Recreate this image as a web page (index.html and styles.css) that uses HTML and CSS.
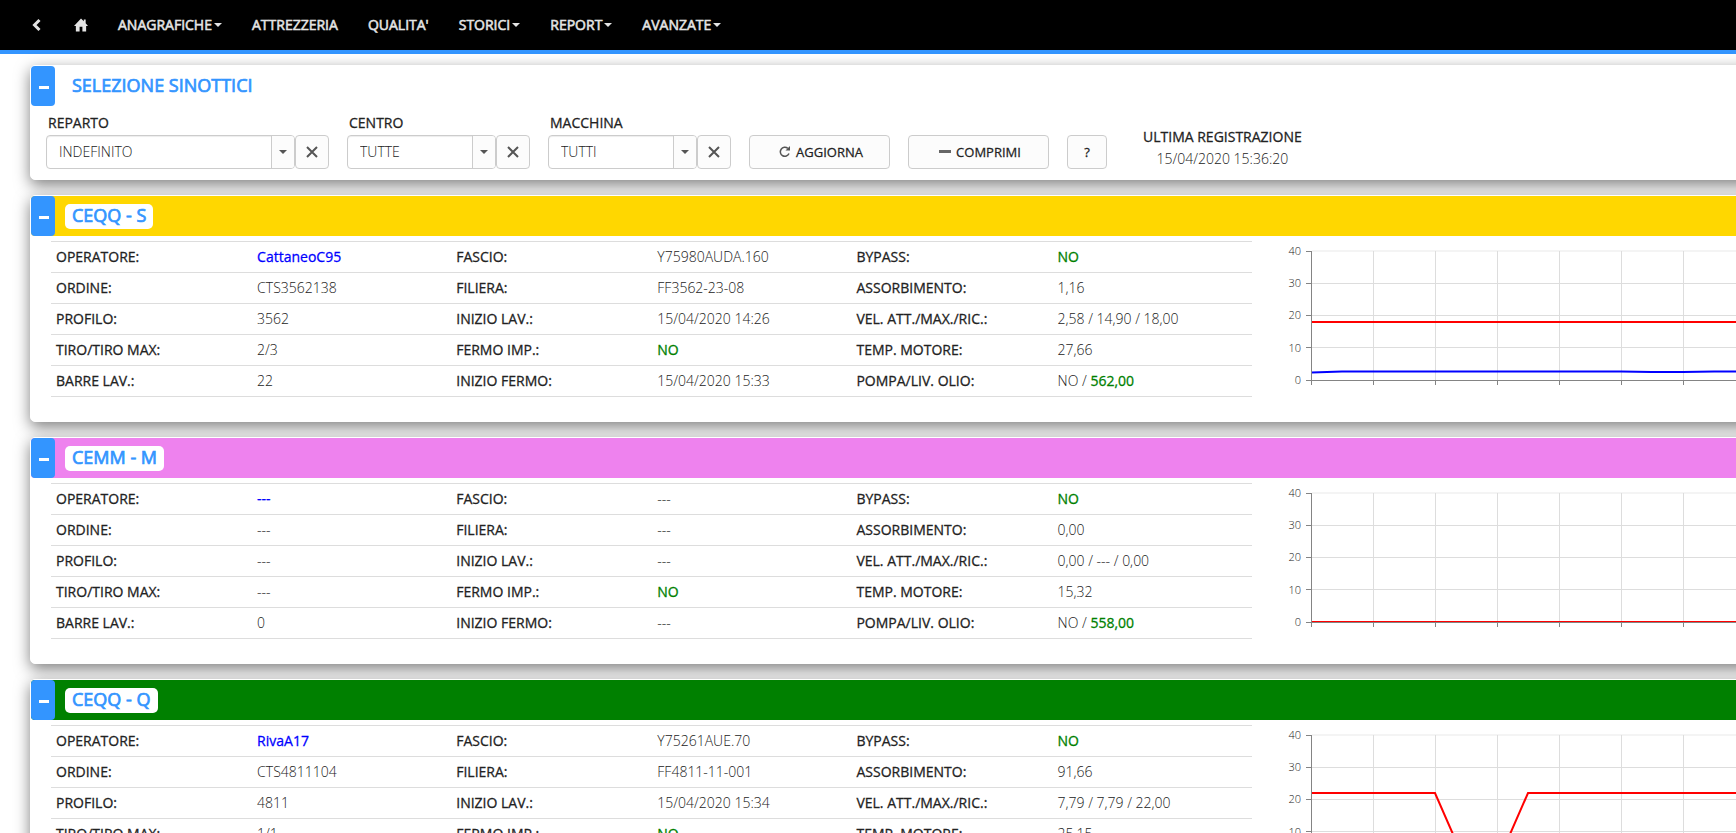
FILE: index.html
```html
<!DOCTYPE html>
<html lang="it">
	<head>
		<meta charset="UTF-8">
		<title>Sinottici</title>
		<link rel="stylesheet" href="styles.css">
	</head>
	<body>
		<!-- shared shapes -->
		<svg class="defs" aria-hidden="true">
			<defs>
				<symbol id="caret" viewBox="0 0 8 4"><path d="M0 0h8L4 4z"/></symbol>
				<symbol id="cross" viewBox="0 0 12 12"><path d="M1 1l10 10M11 1L1 11" fill="none" stroke="currentColor" stroke-width="2"/></symbol>
				<g id="grid" stroke="#ddd">
					<line x1="56" y1="15" x2="100%" y2="15" stroke="#f4f4f4" stroke-width="2"/>
					<line x1="56" y1="47.5" x2="100%" y2="47.5"/>
					<line x1="56" y1="79.5" x2="100%" y2="79.5"/>
					<line x1="56" y1="111.5" x2="100%" y2="111.5"/>
					<path d="M117.5 15v129M179.5 15v129M241.5 15v129M303.5 15v129M365.5 15v129M427.5 15v129"/>
				</g>
				<g id="axis" stroke="#848484">
					<line x1="55" y1="144.5" x2="100%" y2="144.5"/>
					<path d="M55.5 15v134M50 15.5h6M50 47.5h6M50 79.5h6M50 111.5h6M50 144.5h6M117.5 145v4M179.5 145v4M241.5 145v4M303.5 145v4M365.5 145v4M427.5 145v4"/>
				</g>
			</defs>
		</svg>
		<nav class="navbar">
			<a href="#" aria-label="Indietro"><svg width="13" height="14" viewBox="0 0 13 14"><path d="M8.5 2l-5 5 5 5" fill="none" stroke="currentColor" stroke-width="3"/></svg></a>
			<a href="#" aria-label="Home"><svg width="14" height="14" viewBox="0 0 15 14"><path d="M7.5 0l3 3V1h2v4L15 8h-2v6H9V9H6v5H2V8H0z" fill="currentColor"/></svg></a>
			<a href="#">ANAGRAFICHE<svg class="caret"><use href="#caret"/></svg></a>
			<a href="#">ATTREZZERIA</a>
			<a href="#">QUALITA'</a>
			<a href="#">STORICI<svg class="caret"><use href="#caret"/></svg></a>
			<a href="#">REPORT<svg class="caret"><use href="#caret"/></svg></a>
			<a href="#">AVANZATE<svg class="caret"><use href="#caret"/></svg></a>
		</nav>
		<main>
			<section class="panel">
				<header>
					<button class="toggle" type="button" aria-label="Comprimi pannello"></button>
					<h2>SELEZIONE SINOTTICI</h2>
				</header>
				<form class="filters">
					<div class="field wide">
						<label for="reparto">REPARTO</label>
						<div class="combo">
							<div class="select"><select id="reparto"><option>INDEFINITO</option></select><span class="arrow"><svg class="caret"><use href="#caret"/></svg></span></div>
							<button type="button" aria-label="Cancella reparto"><svg class="cross"><use href="#cross"/></svg></button>
						</div>
					</div>
					<div class="field">
						<label for="centro">CENTRO</label>
						<div class="combo">
							<div class="select"><select id="centro"><option>TUTTE</option></select><span class="arrow"><svg class="caret"><use href="#caret"/></svg></span></div>
							<button type="button" aria-label="Cancella centro"><svg class="cross"><use href="#cross"/></svg></button>
						</div>
					</div>
					<div class="field">
						<label for="macchina">MACCHINA</label>
						<div class="combo">
							<div class="select"><select id="macchina"><option>TUTTI</option></select><span class="arrow"><svg class="caret"><use href="#caret"/></svg></span></div>
							<button type="button" aria-label="Cancella macchina"><svg class="cross"><use href="#cross"/></svg></button>
						</div>
					</div>
					<button class="btn" type="button"><svg width="12" height="12" viewBox="0 0 12 12"><path d="M8.8 2.4A4.5 4.5 0 1 0 10 7.5" fill="none" stroke="#555" stroke-width="1.5"/><path d="M6.5 4.5H11V0z" fill="#555"/></svg>AGGIORNA</button>
					<button class="btn" type="button"><svg width="12" height="12" viewBox="0 0 12 12"><path d="M0 4h12v3H0z" fill="#666"/></svg>COMPRIMI</button>
					<button class="btn small" type="button">?</button>
					<div class="last">
						<b>ULTIMA REGISTRAZIONE</b>
						<span>15/04/2020 15:36:20</span>
					</div>
				</form>
			</section>

			<section class="panel">
				<header class="gold">
					<button class="toggle" type="button" aria-label="Comprimi CEQQ - S"></button>
					<h2>CEQQ - S</h2>
				</header>
				<div class="content">
					<table>
						<tr><th>OPERATORE:</th><td><a href="#">CattaneoC95</a></td><th>FASCIO:</th><td>Y75980AUDA.160</td><th>BYPASS:</th><td><b>NO</b></td></tr>
						<tr><th>ORDINE:</th><td>CTS3562138</td><th>FILIERA:</th><td>FF3562-23-08</td><th>ASSORBIMENTO:</th><td>1,16</td></tr>
						<tr><th>PROFILO:</th><td>3562</td><th>INIZIO LAV.:</th><td>15/04/2020 14:26</td><th>VEL. ATT./MAX./RIC.:</th><td>2,58 / 14,90 / 18,00</td></tr>
						<tr><th>TIRO/TIRO MAX:</th><td>2/3</td><th>FERMO IMP.:</th><td><b>NO</b></td><th>TEMP. MOTORE:</th><td>27,66</td></tr>
						<tr><th>BARRE LAV.:</th><td>22</td><th>INIZIO FERMO:</th><td>15/04/2020 15:33</td><th>POMPA/LIV. OLIO:</th><td>NO / <b>562,00</b></td></tr>
					</table>
					<svg class="chart">
						<use href="#grid"/>
						<use href="#axis"/>
						<path class="blue" d="M56 136.5l30-1h279l31 .5h31l31-.5h442"/>
						<path class="red" d="M56 86H900"/>
						<text x="45" y="19">40</text><text x="45" y="51">30</text><text x="45" y="83">20</text><text x="45" y="116">10</text><text x="45" y="148">0</text>
					</svg>
				</div>
			</section>

			<section class="panel">
				<header class="violet">
					<button class="toggle" type="button" aria-label="Comprimi CEMM - M"></button>
					<h2>CEMM - M</h2>
				</header>
				<div class="content">
					<table>
						<tr><th>OPERATORE:</th><td><a href="#">---</a></td><th>FASCIO:</th><td>---</td><th>BYPASS:</th><td><b>NO</b></td></tr>
						<tr><th>ORDINE:</th><td>---</td><th>FILIERA:</th><td>---</td><th>ASSORBIMENTO:</th><td>0,00</td></tr>
						<tr><th>PROFILO:</th><td>---</td><th>INIZIO LAV.:</th><td>---</td><th>VEL. ATT./MAX./RIC.:</th><td>0,00 / --- / 0,00</td></tr>
						<tr><th>TIRO/TIRO MAX:</th><td>---</td><th>FERMO IMP.:</th><td><b>NO</b></td><th>TEMP. MOTORE:</th><td>15,32</td></tr>
						<tr><th>BARRE LAV.:</th><td>0</td><th>INIZIO FERMO:</th><td>---</td><th>POMPA/LIV. OLIO:</th><td>NO / <b>558,00</b></td></tr>
					</table>
					<svg class="chart">
						<use href="#grid"/>
						<path class="red" d="M56 144H900"/>
						<use href="#axis"/>
						<text x="45" y="19">40</text><text x="45" y="51">30</text><text x="45" y="83">20</text><text x="45" y="116">10</text><text x="45" y="148">0</text>
					</svg>
				</div>
			</section>

			<section class="panel">
				<header class="green">
					<button class="toggle" type="button" aria-label="Comprimi CEQQ - Q"></button>
					<h2>CEQQ - Q</h2>
				</header>
				<div class="content">
					<table>
						<tr><th>OPERATORE:</th><td><a href="#">RivaA17</a></td><th>FASCIO:</th><td>Y75261AUE.70</td><th>BYPASS:</th><td><b>NO</b></td></tr>
						<tr><th>ORDINE:</th><td>CTS4811104</td><th>FILIERA:</th><td>FF4811-11-001</td><th>ASSORBIMENTO:</th><td>91,66</td></tr>
						<tr><th>PROFILO:</th><td>4811</td><th>INIZIO LAV.:</th><td>15/04/2020 15:34</td><th>VEL. ATT./MAX./RIC.:</th><td>7,79 / 7,79 / 22,00</td></tr>
						<tr><th>TIRO/TIRO MAX:</th><td>1/1</td><th>FERMO IMP.:</th><td><b>NO</b></td><th>TEMP. MOTORE:</th><td>25,15</td></tr>
					</table>
					<svg class="chart">
						<use href="#grid"/>
						<use href="#axis"/>
						<path class="red" d="M56 73H179L210 144H241L272 73H900"/>
						<text x="45" y="19">40</text><text x="45" y="51">30</text><text x="45" y="83">20</text><text x="45" y="116">10</text><text x="45" y="148">0</text>
					</svg>
				</div>
			</section>
		</main>
	</body>
</html>
```

FILE: styles.css
```css
*{
	box-sizing: border-box;
}
body{
	margin: 0;
	background: #fff;
	color: #222;
	font: 300 14px/20px "Open Sans", sans-serif;
	overflow-x: hidden;
}
.defs{
	position: absolute;
	width: 0;
	height: 0;
}
b, th, label, h2, .navbar a, .btn, td a{
	font-weight: 400;
	-webkit-text-stroke: .02em;
}
h2, .navbar a{
	-webkit-text-stroke: .04em;
}
button, select{
	font: inherit;
	color: inherit;
}
.caret{
	width: 8px;
	height: 4px;
	fill: currentColor;
}
.cross{
	width: 12px;
	height: 12px;
}

/* navbar */
.navbar{
	display: flex;
	height: 54px;
	padding-left: 16px;
	background: #000;
	border-bottom: 4px solid #3395ff;
}
.navbar a{
	display: flex;
	align-items: center;
	gap: 2px;
	padding: 0 15px;
	color: #e4e4e4;
	text-decoration: none;
}

/* panels */
main{
	display: flex;
	flex-direction: column;
	gap: 15px;
	margin-right: -20px;
	padding: 11px 0 15px 30px;
}
.panel{
	border: 1px solid #fff;
	border-radius: 5px;
	background: #fff;
	box-shadow: 0 5px 15px rgba(0,0,0,.5);
}
.panel header{
	display: flex;
	align-items: center;
	gap: 10px;
	height: 40px;
	border-radius: 4px;
}
.gold{
	background: #ffd700;
}
.violet{
	background: #ee82ee;
}
.green{
	background: #008000;
}
.toggle{
	width: 24px;
	height: 40px;
	padding: 3px 0 0 8px;
	border: 0;
	border-radius: 4px;
	background: #3395ff;
}
.toggle::before{
	content: "";
	display: block;
	width: 10px;
	height: 3px;
	background: #fff;
}
h2{
	margin: 0;
	padding: 0 7px 2px;
	border-radius: 5px;
	background: #fff;
	color: #3395ff;
	font-size: 18px;
	line-height: 23px;
}

/* filters */
.filters{
	display: flex;
	align-items: flex-end;
	gap: 18px;
	height: 73px;
	padding: 0 15px 10px;
}
.field{
	width: 183px;
}
.wide{
	width: 283px;
}
label{
	display: block;
	padding: 0 2px 2px;
}
.combo{
	display: flex;
}
.select{
	position: relative;
	flex: 1;
}
select{
	appearance: none;
	display: block;
	width: 100%;
	height: 34px;
	padding: 0 32px 0 12px;
	border: 1px solid #ccc;
	border-radius: 4px;
	background: #fff;
	box-shadow: inset 0 1px 1px rgba(0,0,0,.075);
}
.arrow{
	position: absolute;
	top: 1px;
	right: 1px;
	bottom: 1px;
	width: 23px;
	display: flex;
	align-items: center;
	justify-content: center;
	border-left: 1px solid #ccc;
	background: #fcfcfc;
	border-radius: 0 3px 3px 0;
	color: #555;
	pointer-events: none;
}
.combo button, .btn{
	display: flex;
	align-items: center;
	justify-content: center;
	height: 34px;
	padding: 0;
	border: 1px solid #ccc;
	border-radius: 4px;
	background: #fcfcfc;
}
.combo button{
	width: 34px;
	color: #555;
}
.btn{
	gap: 5px;
	width: 141px;
	padding-left: 3px;
	font-size: 13px;
}
.small{
	width: 40px;
	padding-left: 0;
}
.last{
	display: flex;
	flex-direction: column;
	align-items: center;
	gap: 2px;
	padding-left: 18px;
}

/* machine data */
.content{
	display: grid;
	grid-template-columns: 5fr 2fr;
	gap: 4px;
	height: 185px;
	padding: 0 19px 0 20px;
}
table{
	width: 100%;
	margin-top: 5px;
	align-self: start;
	border-collapse: collapse;
	table-layout: fixed;
}
tr{
	height: 31px;
	border-top: 1px solid #ddd;
	border-bottom: 1px solid #ddd;
}
th, td{
	padding: 0 5px;
	text-align: left;
	white-space: nowrap;
}
td{
	padding-left: 6px;
}
td a{
	color: #00f;
	text-decoration: none;
}
td b{
	color: #008000;
}

/* charts */
.chart{
	width: 100%;
	height: 185px;
}
.chart text{
	fill: #222;
	font-size: 11px;
	text-anchor: end;
}
.red, .blue{
	fill: none;
	stroke: #f00;
	stroke-width: 2;
}
.blue{
	stroke: #00f;
}
```
